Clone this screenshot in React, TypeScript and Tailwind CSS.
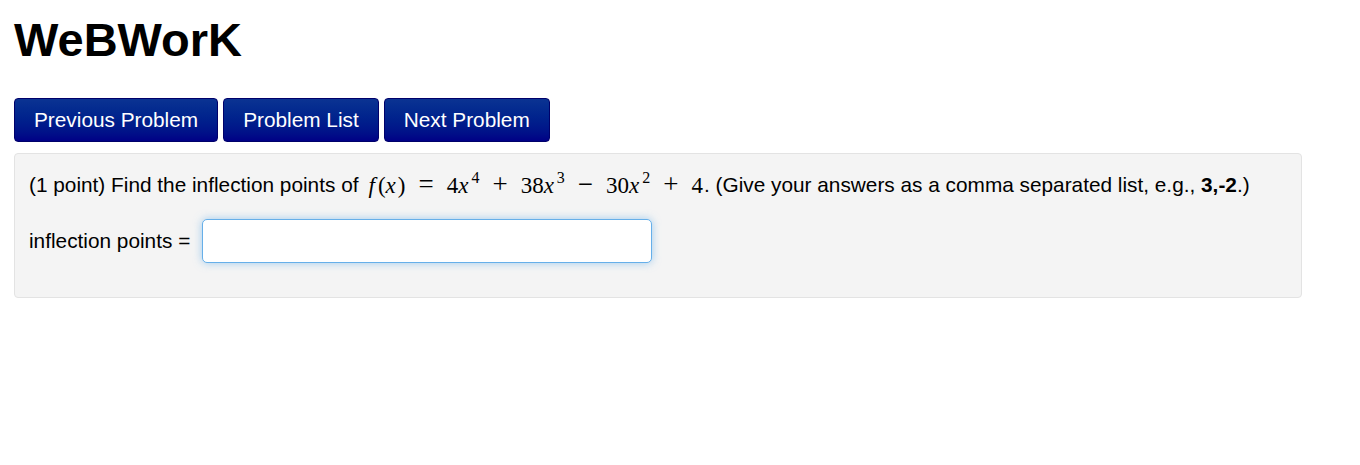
import React from 'react';

const sans = "font-['Liberation_Sans',Arial,sans-serif]";

const Sup: React.FC<{ n: string }> = ({ n }) => (
  <sup className="text-[16px] relative top-[-10px] ml-[1px] leading-none">{n}</sup>
);

const V: React.FC<{ children: React.ReactNode }> = ({ children }) => (
  <span className="italic mr-[2px]">{children}</span>
);

const Op: React.FC<{ children: React.ReactNode }> = ({ children }) => (
  <span className="text-[27px] mx-[13px]">{children}</span>
);

export default function App() {
  return (
    <div className={`min-h-screen bg-white text-black px-[14px] ${sans}`}>
      <h1 className="text-[47px] font-bold leading-none pt-[16px] pb-[35px]">WeBWorK</h1>

      <div className="flex gap-[5px]">
        {['Previous Problem', 'Problem List', 'Next Problem'].map((label) => (
          <button
            key={label}
            className="h-[44px] px-[19px] rounded-[4px] border border-[#00006a] bg-gradient-to-b from-[#0b3392] to-[#000086] text-white text-[20.8px] leading-none"
          >
            {label}
          </button>
        ))}
      </div>

      <div className="mt-[11px] w-[1288px] h-[145px] bg-[#f4f4f4] border border-[#e3e3e3] rounded-[4px] px-[14px] pt-[14px] text-[20.8px]">
        <p className="leading-[32px] flex items-center">
          <span>(1 point) Find the inflection points of</span>
          <span className="font-['Liberation_Serif','Times_New_Roman',serif] text-[23px] ml-[10px] mr-[1px] whitespace-nowrap">
            <span className="italic mr-[3px]">f</span>(<V>x</V>)<Op>=</Op>4<V>x</V>
            <Sup n="4" />
            <Op>+</Op>38<V>x</V>
            <Sup n="3" />
            <Op>−</Op>30<V>x</V>
            <Sup n="2" />
            <Op>+</Op>4
          </span>
          <span>
            . (Give your answers as a comma separated list, e.g., <b>3,-2</b>.)
          </span>
        </p>

        <div className="flex items-center mt-[17px]">
          <label className="mr-[12px]">inflection points =</label>
          <input
            type="text"
            className="w-[450px] h-[44px] bg-white rounded-[5px] border border-[#66afe9] shadow-[0_0_8px_rgba(102,175,233,0.6)] outline-none px-2"
          />
        </div>
      </div>
    </div>
  );
}
